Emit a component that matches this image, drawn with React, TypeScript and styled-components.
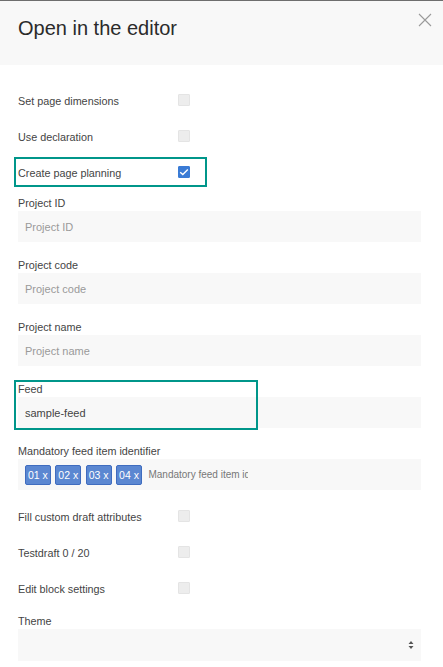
import React from 'react'
import styled, { createGlobalStyle } from 'styled-components'

const GlobalStyle = createGlobalStyle`
  html, body {
    margin: 0;
    padding: 0;
    background: #fff;
  }
  body {
    font-family: 'Liberation Sans', Arial, Helvetica, sans-serif;
    color: #444;
  }
  *, *::before, *::after {
    box-sizing: border-box;
  }
`

const Modal = styled.div`
  width: 443px;
  min-height: 667px;
  border-top: 1px solid #6e6e6e;
  background: #fff;
`

const Header = styled.div`
  height: 64px;
  background: #f8f8f8;
  display: flex;
  align-items: flex-start;
  justify-content: space-between;
  padding: 15px 11px 0 18px;
`

const Title = styled.h1`
  margin: 0;
  font-size: 20px;
  font-weight: 400;
  line-height: 24px;
  color: #2b2b2b;
`

const CloseButton = styled.button`
  border: 0;
  background: none;
  padding: 0;
  margin-top: -4px;
  width: 14px;
  height: 16px;
  cursor: pointer;
  display: flex;
  align-items: center;
  justify-content: center;
`

const Body = styled.div`
  padding: 20px 22px 0 18px;
  display: flex;
  flex-direction: column;
`

const CheckRow = styled.label<{ $highlight?: boolean; $after?: number }>`
  display: flex;
  align-items: center;
  height: 30px;
  width: 193px;
  margin-left: -4px;
  padding-left: 2px;
  margin-bottom: ${(p) => p.$after ?? 6}px;
  border: 2px solid ${(p) => (p.$highlight ? '#00968a' : 'transparent')};
  font-size: 10.8px;
  color: #444;
`

const CheckText = styled.span`
  width: 160px;
  margin-top: 2px;
`

const Box = styled.span<{ $checked?: boolean }>`
  width: 12px;
  height: 12px;
  display: flex;
  align-items: center;
  justify-content: center;
  background: ${(p) => (p.$checked ? '#3a7bd5' : '#ededed')};
  border: 1px solid ${(p) => (p.$checked ? '#3a7bd5' : '#e4e4e4')};
  border-radius: 1px;
`

const Field = styled.div<{ $highlight?: boolean; $after?: number }>`
  position: relative;
  display: flex;
  flex-direction: column;
  margin-bottom: ${(p) => p.$after ?? 16}px;

  &::after {
    content: '';
    display: ${(p) => (p.$highlight ? 'block' : 'none')};
    position: absolute;
    left: -4px;
    top: -2px;
    width: 244px;
    height: 50px;
    border: 2px solid #00968a;
    pointer-events: none;
  }
`

const Label = styled.div`
  font-size: 10.8px;
  line-height: 14px;
  color: #444;
  margin-bottom: 1px;
`

const Input = styled.input`
  display: block;
  height: 31px;
  width: 100%;
  margin: 0;
  border: 0;
  outline: none;
  background: #f8f8f8;
  padding: 0 7px;
  font-family: inherit;
  font-size: 11px;
  color: #444;

  &::placeholder {
    color: #9a9a9a;
  }
`

const TagBox = styled.div`
  height: 31px;
  background: #f8f8f8;
  display: flex;
  align-items: center;
  gap: 4.5px;
  padding: 0 7px;
  overflow: hidden;
`

const Tag = styled.span`
  height: 20px;
  padding: 0 2px;
  display: flex;
  align-items: center;
  background: #5b87d1;
  border: 1px solid #3f6cbf;
  border-radius: 2px;
  color: #fff;
  font-size: 10.5px;
  white-space: nowrap;
`

const TagInput = styled.input`
  width: 102px;
  border: 0;
  outline: none;
  background: transparent;
  padding: 0 0 0 2px;
  font-family: inherit;
  font-size: 10px;
  color: #444;

  &::placeholder {
    color: #777;
  }
`

const SelectBox = styled.div`
  height: 32px;
  background: #f8f8f8;
  display: flex;
  align-items: center;
  justify-content: flex-end;
  padding-right: 7px;
`

const CloseIcon = () => (
  <svg width="14" height="14" viewBox="0 0 14 14">
    <path d="M1 1L13 13M13 1L1 13" stroke="#9a9a9a" strokeWidth="1.1" fill="none" />
  </svg>
)

const Check = () => (
  <svg width="10" height="8" viewBox="0 0 10 8">
    <path d="M1.2 4.2L3.8 6.6L8.8 1.4" stroke="#fff" strokeWidth="1.4" fill="none" />
  </svg>
)

const SelectArrows = () => (
  <svg width="6" height="10" viewBox="0 0 6 10">
    <path d="M3 1L5.5 4H0.5Z M3 9L0.5 6H5.5Z" fill="#555" />
  </svg>
)

const CheckItem: React.FC<{ label: string; checked?: boolean; highlight?: boolean; after?: number }> = ({
  label,
  checked,
  highlight,
  after,
}) => (
  <CheckRow $highlight={highlight} $after={after}>
    <CheckText>{label}</CheckText>
    <Box $checked={checked}>{checked && <Check />}</Box>
  </CheckRow>
)

export default function App() {
  return (
    <>
      <GlobalStyle />
      <Modal>
        <Header>
          <Title>Open in the editor</Title>
          <CloseButton aria-label="close">
            <CloseIcon />
          </CloseButton>
        </Header>
        <Body>
          <CheckItem label="Set page dimensions" />
          <CheckItem label="Use declaration" />
          <CheckItem label="Create page planning" checked highlight after={9} />

          <Field>
            <Label>Project ID</Label>
            <Input placeholder="Project ID" />
          </Field>
          <Field>
            <Label>Project code</Label>
            <Input placeholder="Project code" />
          </Field>
          <Field>
            <Label>Project name</Label>
            <Input placeholder="Project name" />
          </Field>
          <Field $highlight>
            <Label>Feed</Label>
            <Input defaultValue="sample-feed" />
          </Field>
          <Field $after={11}>
            <Label>Mandatory feed item identifier</Label>
            <TagBox>
              {['01', '02', '03', '04'].map((t) => (
                <Tag key={t}>{t} x</Tag>
              ))}
              <TagInput placeholder="Mandatory feed item identifier" />
            </TagBox>
          </Field>

          <CheckItem label="Fill custom draft attributes" />
          <CheckItem label="Testdraft 0 / 20" />
          <CheckItem label="Edit block settings" after={11} />

          <Field>
            <Label>Theme</Label>
            <SelectBox>
              <SelectArrows />
            </SelectBox>
          </Field>
        </Body>
      </Modal>
    </>
  )
}
